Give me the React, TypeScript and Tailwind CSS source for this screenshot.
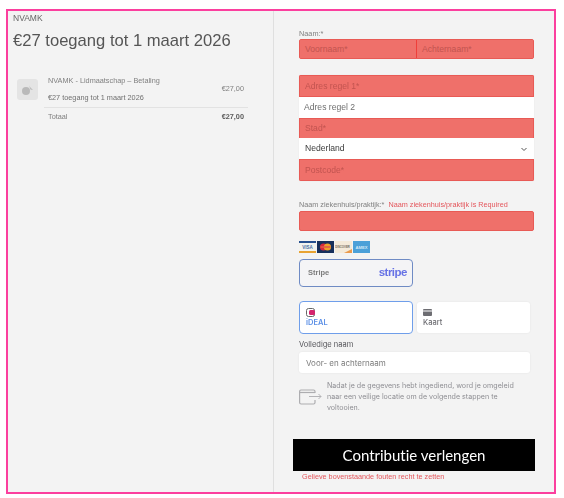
import React from "react";

const sans = "font-['Liberation_Sans',Arial,sans-serif]";

function CardLogos() {
  return (
    <div className="flex gap-px h-[12px]">
      <svg width="17" height="12" viewBox="0 0 17 12">
        <rect width="17" height="12" fill="#f3f3ee" />
        <rect width="17" height="2" fill="#27508f" />
        <rect y="10" width="17" height="2" fill="#e8a332" />
        <text x="8.5" y="8" textAnchor="middle" fontSize="4.5" fontWeight="700" fill="#4a6fa5">VISA</text>
      </svg>
      <svg width="17" height="12" viewBox="0 0 17 12">
        <rect width="17" height="12" fill="#17305c" />
        <circle cx="6.5" cy="6" r="3.6" fill="#d8283c" />
        <circle cx="10.5" cy="6" r="3.6" fill="#eda02a" />
        <rect x="3.5" y="5.2" width="10" height="1.6" fill="#e05a48" />
      </svg>
      <svg width="17" height="12" viewBox="0 0 17 12">
        <rect width="17" height="12" fill="#f4ead9" />
        <text x="7.5" y="7" textAnchor="middle" fontSize="2.8" fontWeight="700" fill="#6f675a">DISCOVER</text>
        <path d="M9 12 L17 12 L17 8 Z" fill="#ea9a4c" />
      </svg>
      <svg width="17" height="12" viewBox="0 0 17 12">
        <rect width="17" height="12" fill="#4ba0d8" />
        <text x="8.5" y="7.8" textAnchor="middle" fontSize="4.2" fontWeight="700" fill="#d3e9f7">AMEX</text>
      </svg>
    </div>
  );
}

function PackageIcon() {
  return (
    <div className="w-[21px] h-[21px] rounded-[3px] bg-[#e4e4e4] flex items-center justify-center">
      <svg width="13" height="12" viewBox="0 0 13 12">
        <circle cx="5" cy="7" r="4" fill="#b9b9b9" />
        <path d="M8 1.5 L9.5 5.5 L12 6 L9 3 Z" fill="#b9b9b9" />
      </svg>
    </div>
  );
}

function Field({ text, error = false, className = "" }: { text: string; error?: boolean; className?: string }) {
  return (
    <div
      className={
        "flex items-center pl-[5px] text-[8.6px] " +
        (error ? "bg-[#ef706a] text-[#c25450] " : "bg-white text-[#6f6f6f] ") +
        className
      }
    >
      {text}
    </div>
  );
}

export default function App() {
  return (
    <div className={"bg-white w-[564px] h-[498px] pt-[9px] pl-[6px] " + sans}>
      <div className="w-[550px] h-[485px] border-2 border-[#fb3f9e] bg-[#f3f3f3] flex">
        <div className="w-[266px] h-full border-r border-[#dfdfdf] pl-[5px] pr-[25px] blur-[0.4px]">
          <div className="text-[8.5px] leading-[10px] mt-[2px] text-[#666666]">NVAMK</div>
          <h1 className="text-[16.6px] leading-[22px] mt-[7px] whitespace-nowrap text-[#555555]">€27 toegang tot 1 maart 2026</h1>
          <div className="mt-[24px] ml-[4px] flex items-center gap-[10px]">
            <PackageIcon />
            <div className="flex-1 flex items-center justify-between pr-[4px]">
              <div>
                <div className="text-[7.3px] leading-[10px] text-[#808080]">NVAMK - Lidmaatschap – Betaling</div>
                <div className="text-[7.3px] leading-[10px] mt-[7px] text-[#707070]">€27 toegang tot 1 maart 2026</div>
              </div>
              <div className="text-[7.3px] text-[#808080]">€27,00</div>
            </div>
          </div>
          <div className="ml-[31px] mt-[4px] border-t border-[#e2e2e2] pt-[4px] pl-[4px] pr-[4px] flex justify-between text-[7.3px] leading-[10px]">
            <span className="text-[#808080]">Totaal</span>
            <span className="font-bold text-[#5c5c5c]">€27,00</span>
          </div>
        </div>

        <div className="flex-1 h-full pl-[25px] blur-[0.4px]">
          <div className="text-[7.3px] leading-[9px] mt-[18px] text-[#808080]">Naam:*</div>
          <div className="w-[235px] h-[20px] mt-[1px] flex rounded-[2px] border border-[#e85a55] bg-[#ef706a] overflow-hidden">
            <Field text="Voornaam*" error className="w-[117px] border-r border-[#ef3f3a]" />
            <Field text="Achternaam*" error className="flex-1" />
          </div>
          <div className="w-[235px] mt-[16px] rounded-[2px] overflow-hidden shadow-[0_0_1px_rgba(0,0,0,0.15)]">
            <Field text="Adres regel 1*" error className="h-[22px] border border-[#e85a55]" />
            <Field text="Adres regel 2" className="h-[21px]" />
            <Field text="Stad*" error className="h-[20px] border-x border-t border-[#e85a55]" />
            <div className="h-[21px] bg-white flex items-center justify-between pl-[6px] pr-[6px] text-[8.6px] text-[#3c3c3c]">
              <span>Nederland</span>
              <svg width="8" height="8" viewBox="0 0 8 8" fill="none" stroke="#555555" strokeWidth="1">
                <path d="M1.5 3 L4 5.5 L6.5 3" />
              </svg>
            </div>
            <Field text="Postcode*" error className="h-[22px] border border-[#e85a55]" />
          </div>
          <div className="mt-[19px] flex gap-[4px] text-[7.25px] leading-[9px]">
            <span className="text-[#808080]">Naam ziekenhuis/praktijk:*</span>
            <span className="text-[#e4565c]">Naam ziekenhuis/praktijk is Required</span>
          </div>
          <div className="w-[235px] h-[20px] mt-[2px] rounded-[2px] border border-[#e85a55] bg-[#ef706a]" />
          <div className="mt-[10px]">
            <CardLogos />
          </div>
          <div className="w-[114px] h-[28px] mt-[6px] rounded-[4px] border-[1.5px] border-[#6f8bc4] bg-[#f4f4f6] flex items-center justify-between pl-[8px] pr-[5px]">
            <span className="text-[7.5px] font-bold text-[#7c7c7c]">Stripe</span>
            <span className="text-[11.5px] font-bold tracking-[-0.5px] text-[#6772e5]">stripe</span>
          </div>
          <div className="mt-[14px] flex gap-[4px] font-['Inter',sans-serif]">
            <div className="w-[114px] h-[33px] rounded-[4px] border-[1.5px] border-[#6f9eea] bg-white pl-[6px] pt-[6px]">
              <svg width="10" height="9" viewBox="0 0 10 9">
                <rect x="0.5" y="0.5" width="8" height="8" rx="2" fill="none" stroke="#666666" />
                <rect x="3" y="2" width="6" height="5" rx="1.5" fill="#d5246e" />
              </svg>
              <div className="text-[7.5px] leading-[10px] mt-[1px] font-semibold text-[#5b8fe6]">iDEAL</div>
            </div>
            <div className="w-[113px] h-[31px] mt-[1px] rounded-[3px] bg-white pl-[6px] pt-[6px] shadow-[0_0_2px_rgba(0,0,0,0.08)]">
              <svg width="10" height="9" viewBox="0 0 10 9">
                <rect y="1" width="9" height="7" rx="1" fill="#6d6d72" />
                <rect y="2.5" width="9" height="1" fill="#ffffff" />
              </svg>
              <div className="text-[7.5px] leading-[10px] mt-[1px] font-medium text-[#6d6d72]">Kaart</div>
            </div>
          </div>
          <div className="text-[7.5px] leading-[9px] mt-[6px] text-[#55555a] font-['Inter',sans-serif]">Volledige naam</div>
          <div className="w-[231px] h-[21px] mt-[3px] rounded-[3px] bg-white flex items-center pl-[7px] text-[8px] text-[#7c7c7c] font-['Inter',sans-serif] shadow-[0_0_2px_rgba(0,0,0,0.08)]">
            Voor- en achternaam
          </div>
          <div className="mt-[7px] flex items-center font-['Inter',sans-serif]">
            <svg width="23" height="16" viewBox="0 0 23 16" fill="none" stroke="#adadb0" strokeWidth="1.2" className="shrink-0">
              <path d="M16 4 V2.5 a1.5 1.5 0 0 0 -1.5 -1.5 H2 A1.5 1.5 0 0 0 .6 2.5 V13.5 a1.5 1.5 0 0 0 1.5 1.5 H14.5 a1.5 1.5 0 0 0 1.5 -1.5 V11" />
              <path d="M.6 3.5 H16" />
              <path d="M10 7.5 H22 M19.5 5 L22 7.5 L19.5 10" strokeWidth="0.9" />
            </svg>
            <p className="ml-[5px] w-[192px] text-[7.1px] leading-[11px] text-[#8e8e93]">
              Nadat je de gegevens hebt ingediend, word je omgeleid naar een veilige locatie om de volgende stappen te voltooien.
            </p>
          </div>
          <div className="w-[242px] h-[32px] mt-[26px] -ml-[6px] bg-black flex items-center justify-center text-[15px] text-white font-['Lato',sans-serif] [font-variant-ligatures:none]">
            Contributie verlengen
          </div>
          <div className="text-[7.25px] leading-[9px] mt-[1px] ml-[3px] text-[#e4565c]">Gelieve bovenstaande fouten recht te zetten</div>
        </div>
      </div>
    </div>
  );
}
